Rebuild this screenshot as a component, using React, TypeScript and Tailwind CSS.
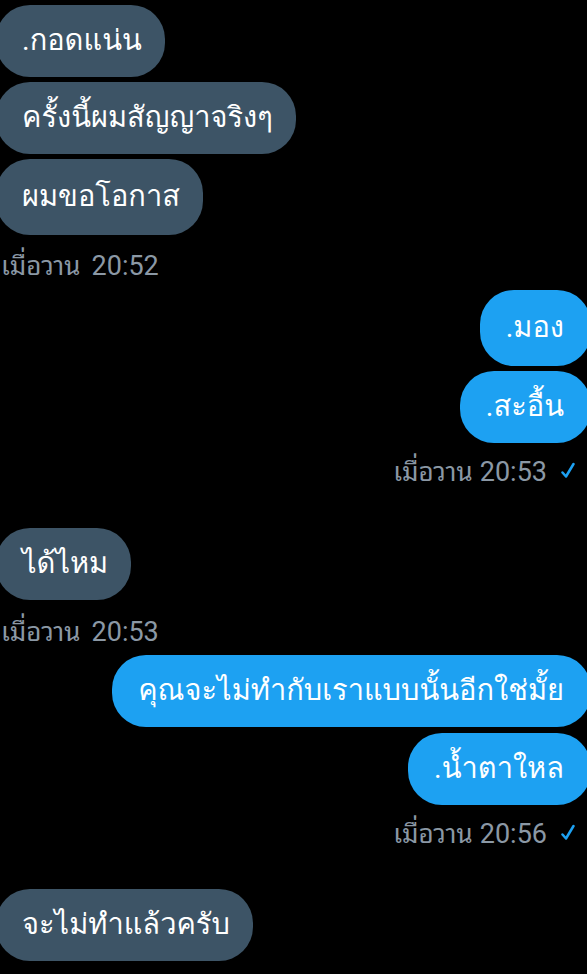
import React from "react";

const Check = () => (
  <svg width="14" height="17" viewBox="0 0 14 17" className="ml-[14px]" fill="none" stroke="#1DA1F2" strokeWidth="2.5" strokeLinecap="round" strokeLinejoin="round">
    <path d="M1.5 10.5 L5 14.5 L12.5 2" />
  </svg>
);

const Left = ({ text, tall }: { text: string; tall?: boolean }) => (
  <div className="flex justify-start">
    <div className={`${tall ? "h-[76px]" : "h-[72px]"} flex items-center pl-[26px] pr-[23px] rounded-[34px] bg-[#3D5466] text-white text-[29px] whitespace-nowrap`}>
      {text}
    </div>
  </div>
);

const Right = ({ text, tall }: { text: string; tall?: boolean }) => (
  <div className="flex justify-end">
    <div className={`${tall ? "h-[76px]" : "h-[72px]"} flex items-center pl-[26px] pr-[27px] rounded-[34px] bg-[#1DA1F2] text-white text-[29px] whitespace-nowrap`}>
      {text}
    </div>
  </div>
);

const Stamp = ({ t, gap }: { t: string; gap: string }) => (
  <span className="flex items-baseline leading-[30px]">
    <span className="text-[26px] font-['Noto_Sans_Thai_Looped',Loma,sans-serif]">เมื่อวาน</span>
    <span className={gap}>{t}</span>
  </span>
);

const TimeL = ({ t, mt }: { t: string; mt: string }) => (
  <div className={`h-[30px] flex items-center ${mt} pl-[5px] text-[27px] text-[#8B98A5] whitespace-nowrap`}>
    <Stamp t={t} gap="ml-[11px]" />
  </div>
);

const TimeR = ({ t }: { t: string }) => (
  <div className="h-[30px] flex items-center justify-end mt-[12px] pr-[12px] text-[27px] text-[#8B98A5] whitespace-nowrap">
    <Stamp t={t} gap="ml-[7px]" />
    <Check />
  </div>
);

export default function App() {
  return (
    <div
      className="w-[587px] h-[974px] bg-black overflow-hidden"
      style={{ fontFamily: "Roboto, Loma, 'Noto Sans Thai Looped', sans-serif" }}
    >
      <div className="pt-[5px] -ml-[4px] flex flex-col">
        <div className="flex flex-col gap-[5px]">
          <Left text=".กอดแน่น" />
          <Left text="ครั้งนี้ผมสัญญาจริงๆ" />
          <Left text="ผมขอโอกาส" tall />
        </div>
        <TimeL t="20:52" mt="mt-[14px]" />
        <div className="mt-[11px] flex flex-col gap-[5px] -mr-[4px]">
          <Right text=".มอง" tall />
          <Right text=".สะอื้น" />
        </div>
        <TimeR t="20:53" />
        <div className="mt-[43px] flex flex-col gap-[5px]">
          <Left text="ได้ไหม" />
        </div>
        <TimeL t="20:53" mt="mt-[15px]" />
        <div className="mt-[10px] flex flex-col gap-[6px] -mr-[4px]">
          <Right text="คุณจะไม่ทำกับเราแบบนั้นอีกใช่มั้ย" />
          <Right text=".น้ำตาใหล" />
        </div>
        <TimeR t="20:56" />
        <div className="mt-[42px] flex flex-col gap-[5px]">
          <Left text="จะไม่ทำแล้วครับ" />
        </div>
        <TimeL t="20:57" mt="mt-[15px]" />
      </div>
    </div>
  );
}
